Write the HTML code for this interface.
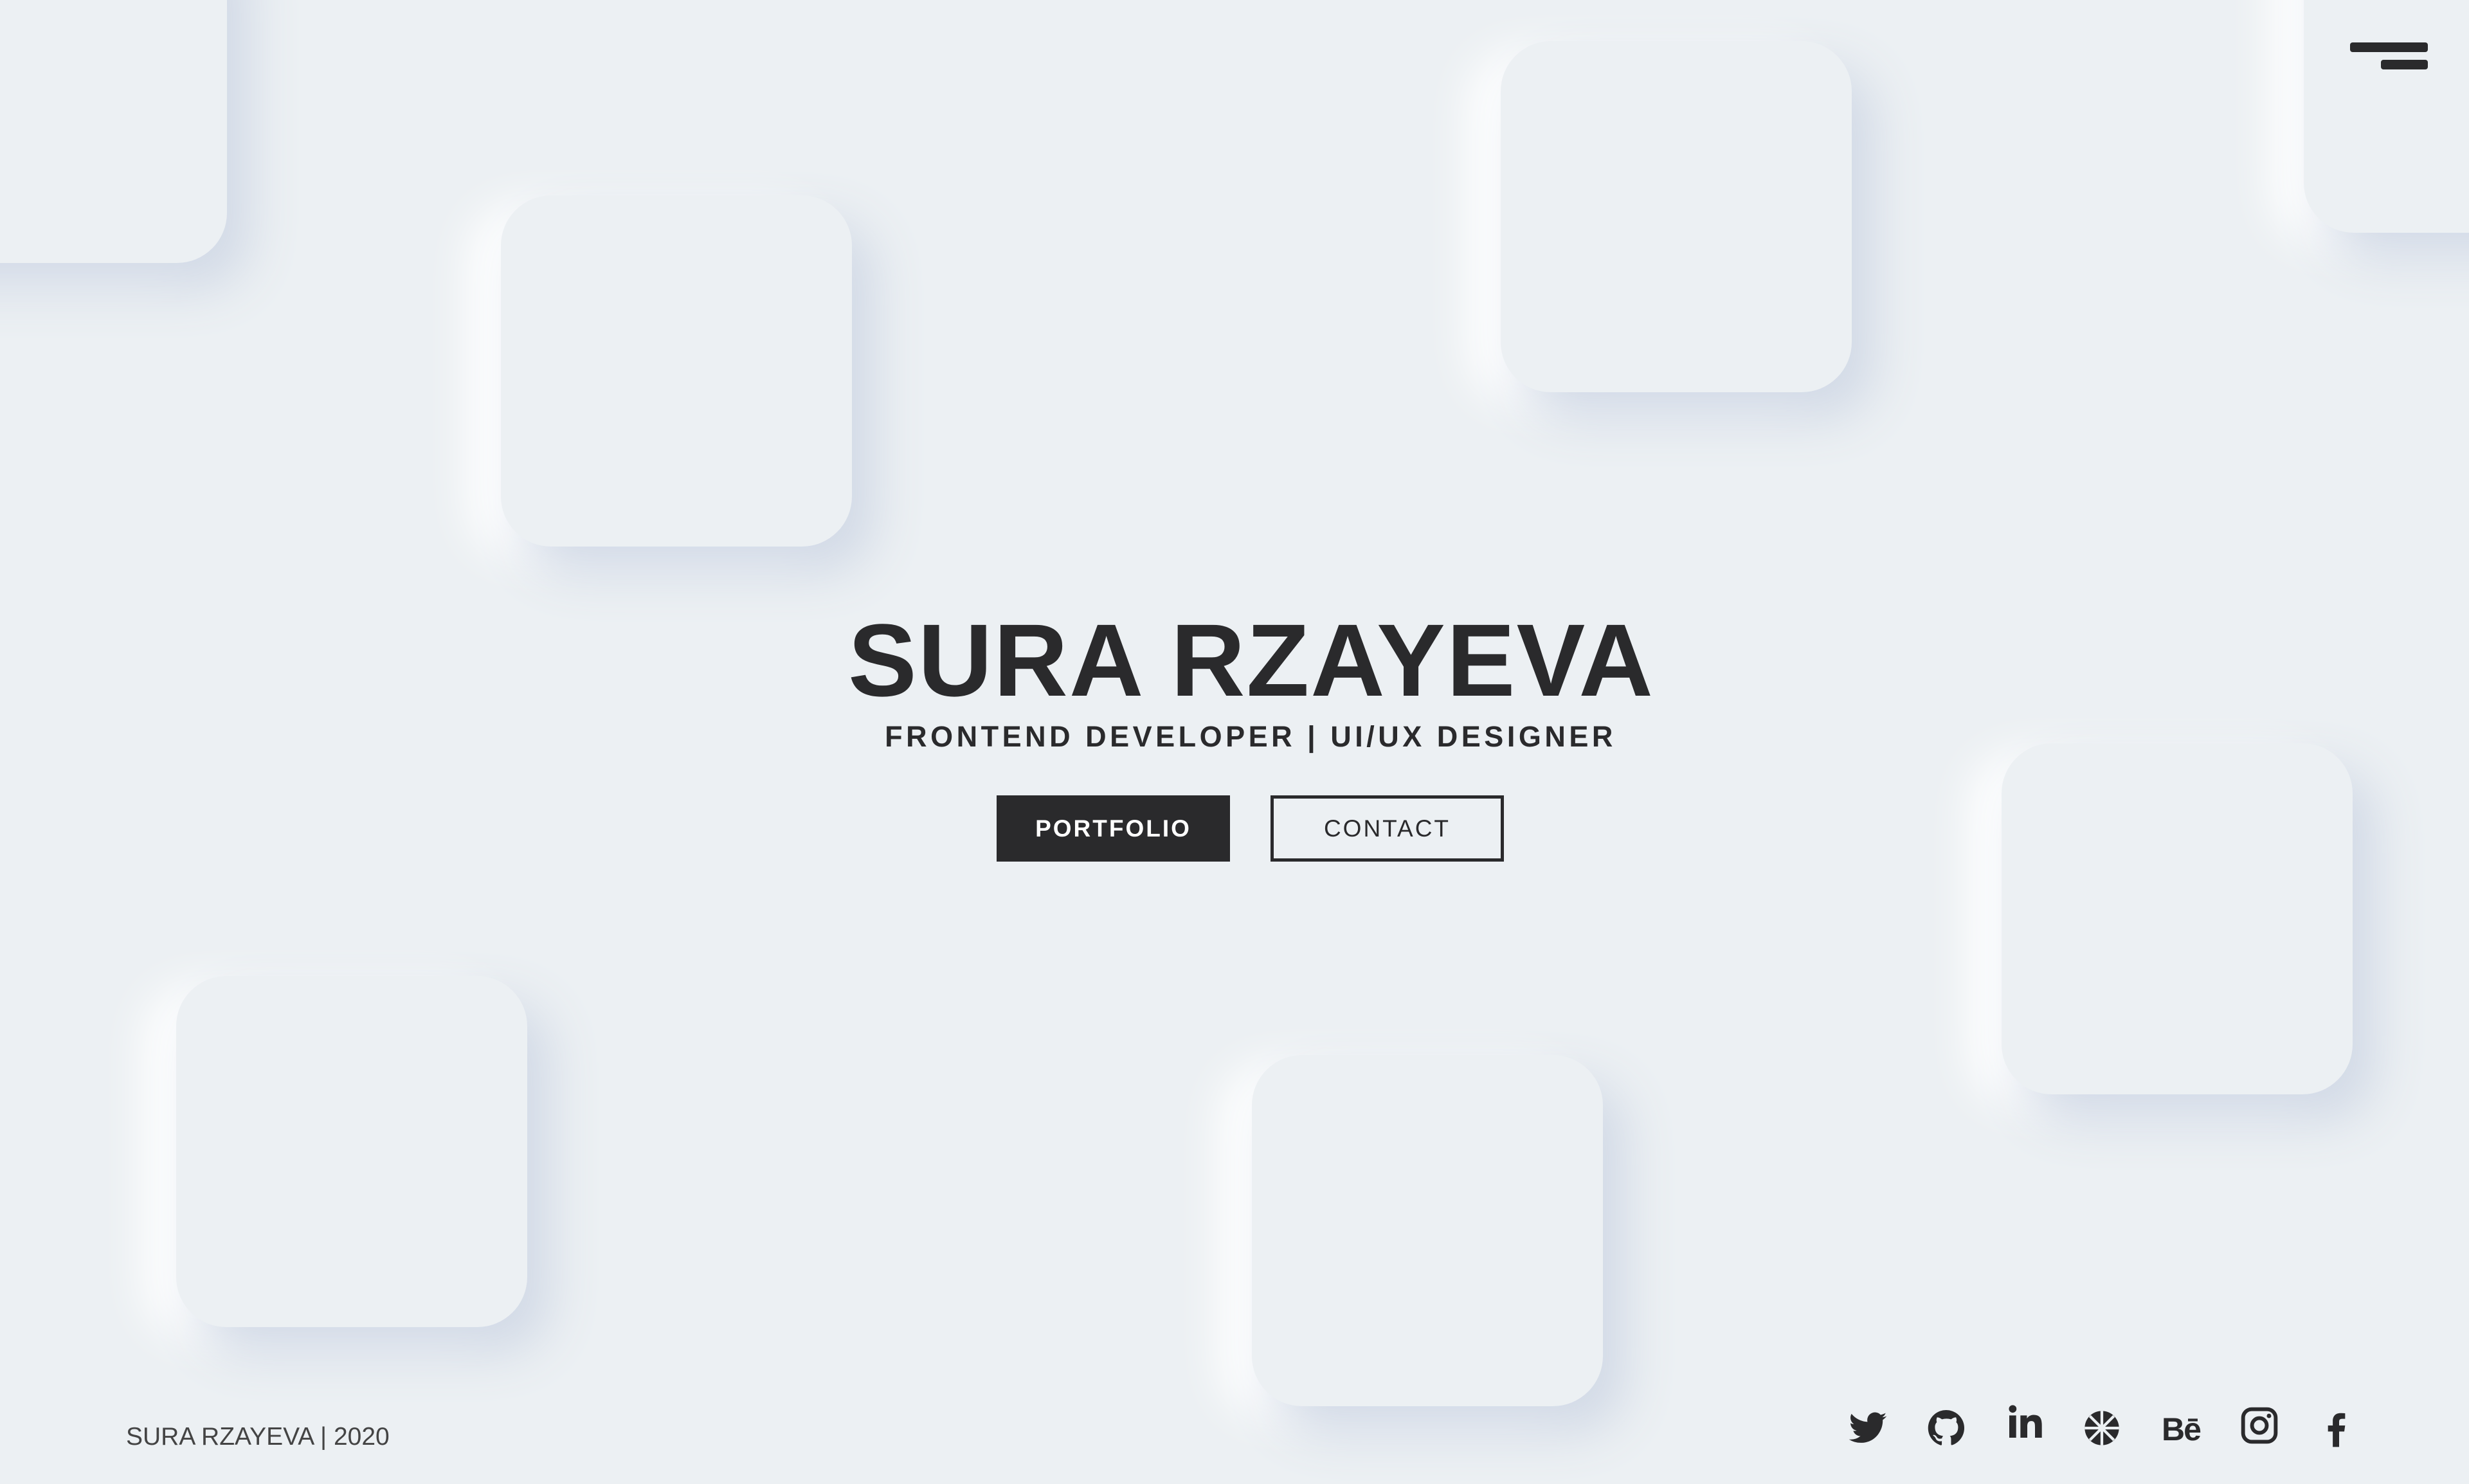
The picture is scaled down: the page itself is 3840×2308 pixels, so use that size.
<!DOCTYPE html>
<html><head><meta charset="utf-8"><style>
html,body{margin:0;padding:0}
body{width:3840px;height:2308px;background:#ecf0f3;position:relative;overflow:hidden;font-family:"Liberation Sans",sans-serif;color:#2a2a2c}
.sq{position:absolute;width:546px;height:546px;border-radius:78px;background:#ecf0f3;box-shadow:35px 40px 80px #d1d9e6,-50px 15px 70px #ffffff}
.hb{position:absolute;background:#2a2a2c;border-radius:4px}
h1{position:absolute;left:26px;width:3840px;top:937px;margin:0;text-align:center;font-size:160px;font-weight:bold;letter-spacing:2px;line-height:180px}
.sub{position:absolute;left:25px;width:3840px;top:1120px;text-align:center;font-size:45px;font-weight:bold;letter-spacing:5.5px}
.btn{position:absolute;top:1237px;width:363px;height:103px;box-sizing:border-box;display:flex;align-items:center;justify-content:center;font-size:37px;letter-spacing:3px}
.foot{position:absolute;left:196px;top:2213px;font-size:39px;color:#444}
.ic{position:absolute;top:2189px;width:64px;height:64px}
</style></head><body>
<div class="sq" style="left:-193px;top:-137px"></div>
<div class="sq" style="left:779px;top:304px"></div>
<div class="sq" style="left:2334px;top:64px"></div>
<div class="sq" style="left:3583px;top:-184px"></div>
<div class="sq" style="left:3113px;top:1156px"></div>
<div class="sq" style="left:274px;top:1518px"></div>
<div class="sq" style="left:1947px;top:1641px"></div>
<div class="hb" style="left:3655px;top:66px;width:121px;height:15px"></div>
<div class="hb" style="left:3703px;top:93px;width:73px;height:15px"></div>
<h1>SURA RZAYEVA</h1>
<div class="sub">FRONTEND DEVELOPER | UI/UX DESIGNER</div>
<div class="btn" style="left:1550px;background:#2a2a2c;color:#fff;font-weight:bold">PORTFOLIO</div>
<div class="btn" style="left:1976px;border:5px solid #2a2a2c;color:#2a2a2c">CONTACT</div>
<div class="foot">SURA RZAYEVA | 2020</div>
<svg class="ic" style="left:2873px" viewBox="0 0 24 24"><path fill="#2a2a2c" d="M23 5c-.8.4-1.7.6-2.6.7.9-.6 1.6-1.4 2-2.5-.9.5-1.9.9-2.9 1.1A4.5 4.5 0 0 0 11.8 8.4 12.8 12.8 0 0 1 2.5 3.7a4.5 4.5 0 0 0 1.4 6c-.7 0-1.4-.2-2-.6 0 2.2 1.5 4 3.6 4.4-.7.2-1.4.2-2 .1.6 1.800 2.2 3.1 4.2 3.1A9 9 0 0 1 1 18.6 12.8 12.8 0 0 0 7.9 20.6c8.3 0 12.8-6.9 12.8-12.8v-.6c.9-.6 1.7-1.4 2.3-2.2z"/></svg>
<svg class="ic" style="left:2995px" viewBox="0 0 24 24"><path fill="#2a2a2c" d="M12 1.5a10.5 10.5 0 0 0-3.3 20.5c.5.1.7-.2.7-.5v-1.9c-2.9.6-3.5-1.4-3.5-1.4-.5-1.2-1.2-1.5-1.2-1.5-1-.7.1-.7.1-.7 1 .1 1.6 1.1 1.6 1.1.9 1.6 2.5 1.1 3.1.9.1-.7.4-1.1.7-1.4-2.3-.3-4.8-1.200-4.8-5.2 0-1.1.4-2.1 1.1-2.8-.1-.3-.5-1.3.1-2.8 0 0 .9-.3 2.9 1.1a10 10 0 0 1 5.3 0c2-1.4 2.9-1.1 2.9-1.1.6 1.5.2 2.5.1 2.8.7.7 1.1 1.7 1.1 2.8 0 4-2.5 4.9-4.8 5.2.4.3.7 1 .7 1.9v2.9c0 .3.2.6.7.5A10.5 10.5 0 0 0 12 1.5z"/></svg>
<svg class="ic" style="left:3117px;top:2180px" viewBox="0 0 24 24"><path fill="#2a2a2c" d="M3 8h4v13H3zM5 2a2.2 2.2 0 1 1 0 4.4A2.2 2.2 0 0 1 5 2zM9.5 8h3.8v1.8c.6-1 1.9-2.1 3.9-2.1 4.1 0 4.8 2.7 4.8 6.2V21h-4v-6.3c0-1.5 0-3.4-2.1-3.4s-2.4 1.6-2.4 3.3V21h-4z"/></svg>
<svg class="ic" style="left:3237px" viewBox="0 0 24 24"><circle cx="12" cy="12" r="10" fill="#2a2a2c"/><path d="M12 2v20M2 12h20M5 5l14 14M19 5L5 19" stroke="#ecf0f3" stroke-width="1.6"/></svg>
<div style="position:absolute;left:3362px;top:2194px;font-size:50px;font-weight:bold;letter-spacing:-2px">Bē</div>
<svg class="ic" style="left:3482px;top:2185px" viewBox="0 0 24 24"><rect x="2.5" y="2.5" width="19" height="19" rx="5" fill="none" stroke="#2a2a2c" stroke-width="2.2"/><circle cx="12" cy="12" r="4.3" fill="none" stroke="#2a2a2c" stroke-width="2.2"/><circle cx="17.6" cy="6.4" r="1.3" fill="#2a2a2c"/></svg>
<svg class="ic" style="left:3602px" viewBox="0 0 24 24"><path fill="#2a2a2c" d="M13.5 23v-9h3l.5-3.5h-3.5V8.3c0-1 .3-1.7 1.8-1.7H17V3.4c-.3 0-1.4-.1-2.7-.1-2.7 0-4.5 1.6-4.5 4.6v2.6H7V14h2.8v9z"/></svg>
</body></html>
